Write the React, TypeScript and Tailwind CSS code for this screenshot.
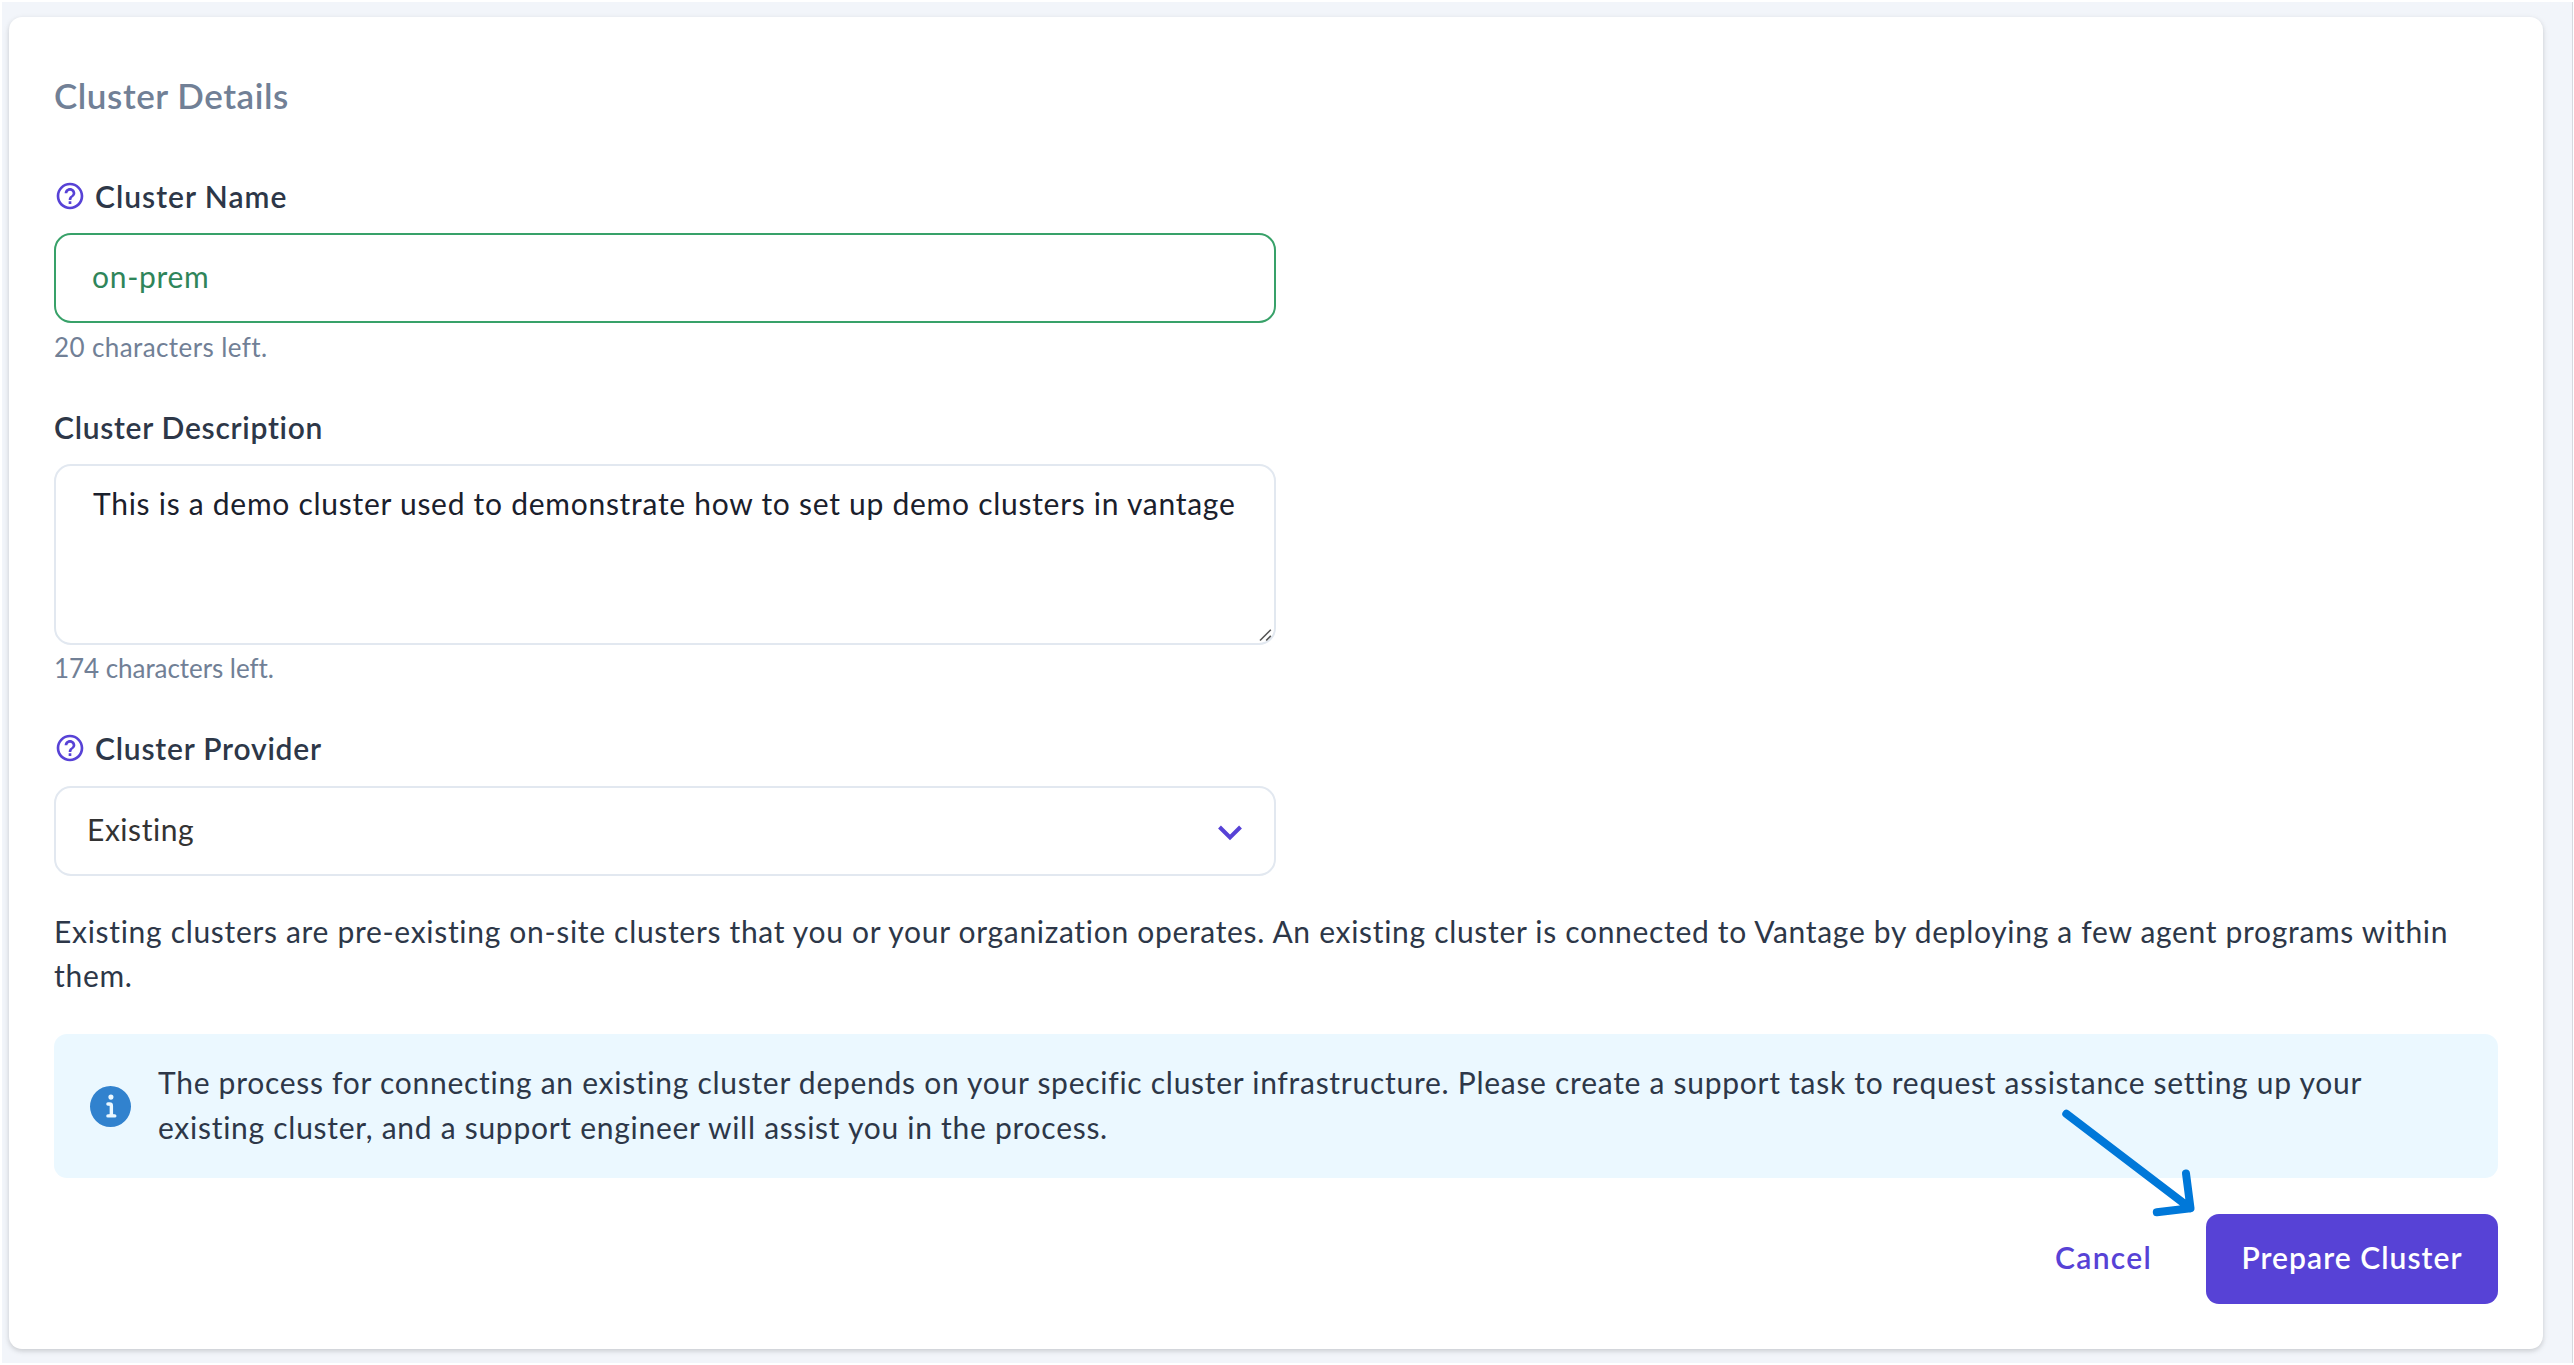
import React from 'react';
import { MdHelpOutline } from 'react-icons/md';

function FieldLabel({ children, help, className }: { children: React.ReactNode; help?: boolean; className: string }) {
  return (
    <div className={`flex h-9 items-center text-[30px] leading-9 font-semibold text-[#2d3748] ${className}`}>
      {help && <MdHelpOutline className="mr-[9px] size-8 shrink-0 text-[#5742d6]" />}
      <span className="whitespace-nowrap">{children}</span>
    </div>
  );
}

function InfoIcon() {
  return (
    <svg viewBox="0 0 24 24" className="size-[41px] shrink-0 text-[#3182ce]">
      <path
        fill="currentColor"
        d="M12,0A12,12,0,1,0,24,12,12.013,12.013,0,0,0,12,0Zm.25,5a1.5,1.5,0,1,1-1.5,1.5A1.5,1.5,0,0,1,12.25,5ZM14.5,18.5h-4a1,1,0,0,1,0-2h.75a.25.25,0,0,0,.25-.25v-4.5a.25.25,0,0,0-.25-.25H10.5a1,1,0,0,1,0-2h1a2,2,0,0,1,2,2v4.75a.25.25,0,0,0,.25.25h.75a1,1,0,1,1,0,2Z"
      />
    </svg>
  );
}

export default function App() {
  return (
    <div className="h-[1365px] w-[2574px] overflow-hidden bg-white pt-0.5 pl-0.5 font-['Lato',sans-serif]">
      <div className="h-[1361px] w-[2571px] border-r border-[#d5d8de] bg-[#f2f5fa] pt-[15px] pl-[7px]">
        <main className="relative h-[1332px] w-[2534px] rounded-[13px] bg-white px-[45px] pt-14 shadow-[0_2px_6px_rgba(0,0,0,0.1),0_2px_4px_rgba(0,0,0,0.08)]">
          <h1 className="h-11 text-[35px] leading-[44px] font-semibold tracking-[0.56px] text-[#718096]">Cluster Details</h1>

          <FieldLabel help className="mt-[61px] tracking-[1px]">Cluster Name</FieldLabel>
          <div className="mt-[19px] flex h-[90px] w-[1222px] items-center rounded-[17px] border-2 border-[#38a169] px-9 pb-[3px] text-[30px] tracking-[0.7px] text-[#2f855a]">
            on-prem
          </div>
          <p className="mt-2 text-[26px] leading-8 tracking-[0.4px] text-[#718096]">20 characters left.</p>

          <FieldLabel className="mt-[46px] tracking-[0.72px]">Cluster Description</FieldLabel>
          <div className="relative mt-[19px] h-[181px] w-[1222px] rounded-[17px] border-2 border-[#e2e8f0] px-[37px] pt-4 text-[30px] leading-[42px] tracking-[0.73px] whitespace-nowrap text-[#1a202c]">
            This is a demo cluster used to demonstrate how to set up demo clusters in vantage
            <svg viewBox="0 0 14 14" className="absolute right-px bottom-px size-3.5" fill="none" stroke="#555" strokeWidth="1.6">
              <path d="M1 12.5 11.8 1.7M7.2 12.5l4.6-4.6" />
            </svg>
          </div>
          <p className="mt-[7px] text-[26px] leading-8 tracking-[-0.05px] text-[#718096]">174 characters left.</p>

          <FieldLabel help className="mt-[46px] tracking-[0.8px]">Cluster Provider</FieldLabel>
          <div className="mt-5 flex h-[90px] w-[1222px] items-center justify-between rounded-[17px] border-2 border-[#e2e8f0] pr-8 pl-[31px] text-[30px] tracking-[0.55px] text-[#333333]">
            <span className="pb-[3px]">Existing</span>
            <svg viewBox="0 0 24 16" className="mt-[3px] h-4 w-6" fill="none" stroke="#5742d6" strokeWidth="4">
              <path d="M1.5 2 12 12.5 22.5 2" />
            </svg>
          </div>

          <p className="mt-[34px] h-[87px] text-[30px] leading-[43.5px] tracking-[0.69px] whitespace-nowrap text-[#2d3748]">
            Existing clusters are pre-existing on-site clusters that you or your organization operates. An existing cluster is connected to Vantage by deploying a few agent programs within
            <br />
            them.
          </p>

          <div className="mt-[37px] flex h-36 items-center rounded-[13px] bg-[#ebf8ff] pl-9">
            <InfoIcon />
            <p className="ml-[27px] pb-[3px] text-[30px] leading-[45px] tracking-[0.725px] whitespace-nowrap text-[#2d3748]">
              The process for connecting an existing cluster depends on your specific cluster infrastructure. Please create a support task to request assistance setting up your
              <br />
              existing cluster, and a support engineer will assist you in the process.
            </p>
          </div>

          <div className="mt-9 flex justify-end text-[30px] font-semibold">
            <button className="mr-[19px] h-[90px] px-[35px] pb-1 tracking-[1.3px] text-[#5742d6]">Cancel</button>
            <button className="h-[90px] w-[292px] rounded-[13px] bg-[#5742d6] pb-1 tracking-[1.05px] text-white">Prepare Cluster</button>
          </div>

          <svg viewBox="0 0 150 120" className="absolute top-[1088px] left-[2046px] h-[120px] w-[150px]" fill="none" stroke="#0078d9" strokeWidth="8" strokeLinecap="round" strokeLinejoin="round">
            <path d="M11.3 8.8 135.3 103.2M131 68.5 135.5 103.2 101.8 107.3" />
          </svg>
        </main>
      </div>
    </div>
  );
}
